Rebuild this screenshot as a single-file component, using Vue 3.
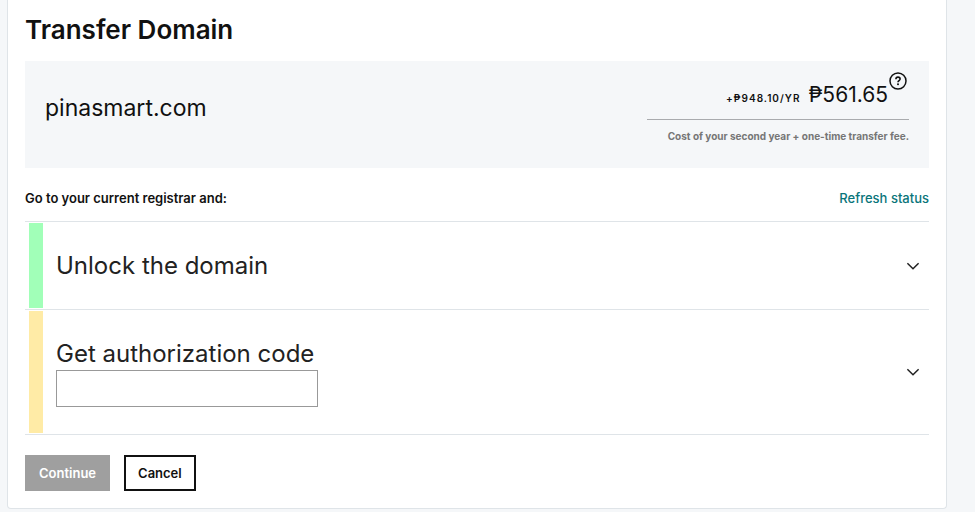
<template>
    <main class="transferCard">
        <h1 class="pageTitle">Transfer Domain</h1>

        <!-- Domain and price -->
        <section class="domainSummary">
            <h2 class="domainName">{{ domain }}</h2>
            <div class="priceBox">
                <div class="priceRow">
                    <span class="renewalPrice">+₱948.10/YR</span>
                    <span class="price">₱561.65</span>
                    <button type="button" class="helpButton" aria-label="Price details">
                        <svg width="18" height="18" viewBox="0 0 18 18" fill="none" stroke="currentColor">
                            <circle cx="9" cy="9" r="8" stroke-width="1.5" />
                            <path d="M6.9 7.2C6.9 5.9 7.8 5.1 9 5.1s2.1.8 2.1 1.9c0 1.5-2.1 1.6-2.1 3.2" stroke-width="1.6" />
                            <circle cx="9" cy="12.3" r="1" fill="currentColor" stroke="none" />
                        </svg>
                    </button>
                </div>
                <p class="priceNote">Cost of your second year + one-time transfer fee.</p>
            </div>
        </section>

        <div class="registrarRow">
            <span class="registrarText">Go to your current registrar and:</span>
            <a href="#" class="refreshLink" @click.prevent>Refresh status</a>
        </div>

        <!-- Steps -->
        <ul class="steps">
            <li v-for="step in steps" :key="step.id" class="step" :class="step.status">
                <div class="stepBody">
                    <label v-if="step.hasInput" class="stepTitle" :for="step.id">{{ step.title }}</label>
                    <h3 v-else class="stepTitle">{{ step.title }}</h3>
                    <input v-if="step.hasInput" :id="step.id" v-model="authCode" type="text" class="codeInput">
                </div>
                <button type="button" class="toggleButton" :aria-label="step.title">
                    <svg width="14" height="8" viewBox="0 0 14 8" fill="none" stroke="currentColor" stroke-width="1.5">
                        <path d="M1.4 1.2 7 6.7l5.6-5.5" />
                    </svg>
                </button>
            </li>
        </ul>

        <div class="actions">
            <button type="button" class="btn btnContinue" :disabled="!authCode">Continue</button>
            <button type="button" class="btn btnCancel">Cancel</button>
        </div>
    </main>
</template>

<script setup>
import { ref } from "vue";

const domain = "pinasmart.com";
const authCode = ref("");

const steps = [
    { id: "unlock", title: "Unlock the domain", status: "done", hasInput: false },
    { id: "auth-code", title: "Get authorization code", status: "pending", hasInput: true },
];
</script>

<style>
body {
    margin: 0;
    background: #f5f7f9;
}
</style>

<style scoped>
.transferCard {
    margin: 0 28px 3px 7px;
    padding: 12px 17px 17px;
    border: 1px solid #dfe4e8;
    border-top: 0;
    border-radius: 0 0 4px 4px;
    background: #fff;
    color: #111;
    font-family: Inter, "Liberation Sans", sans-serif;
}

.pageTitle {
    margin: 0 0 13px;
    font-size: 26px;
    line-height: 36px;
    font-weight: 600;
}

.domainSummary {
    display: flex;
    justify-content: space-between;
    padding: 11px 20px 24px;
    background: #f5f7f9;
}

.domainName {
    margin: 20px 0 0;
    font-size: 23px;
    line-height: 32px;
    font-weight: 400;
}

.priceBox {
    width: 262px;
}

.priceRow {
    display: flex;
    align-items: baseline;
    justify-content: flex-end;
    height: 47px;
    border-bottom: 1px solid #a9abae;
}

.renewalPrice {
    margin-right: 8px;
    font-size: 10px;
    font-weight: 600;
    letter-spacing: 1px;
}

.price {
    font-size: 21px;
    line-height: 46px;
}

.helpButton {
    align-self: flex-start;
    margin: 0 2px 0 1px;
    padding: 0;
    border: 0;
    background: none;
    color: #111;
    line-height: 0;
}

.priceNote {
    margin: 8px 0 0;
    color: #767676;
    font-size: 10px;
    line-height: 16px;
    font-weight: 700;
    text-align: right;
    white-space: nowrap;
}

.registrarRow {
    display: flex;
    justify-content: space-between;
    padding: 20px 0 13px;
    font-size: 13px;
    line-height: 20px;
}

.registrarText {
    font-weight: 600;
}

.refreshLink {
    color: #09757a;
    font-weight: 500;
    text-decoration: none;
}

.steps {
    margin: 0;
    padding: 0;
    border-top: 1px solid #dfe4e8;
    list-style: none;
}

.step {
    display: flex;
    align-items: center;
    justify-content: space-between;
    padding: 1px 9px 1px 4px;
    border-bottom: 1px solid #dfe4e8;
    color: #222;
}

.stepBody {
    display: flex;
    flex-direction: column;
    padding: 26px 0;
    padding-left: 13px;
    border-left: 14px solid transparent;
}

.done .stepBody {
    border-left-color: #a1ffb8;
}

.pending .stepBody {
    border-left-color: #ffeba6;
}

.stepTitle {
    margin: 0;
    font-size: 24px;
    line-height: 33px;
    font-weight: 400;
}

.codeInput {
    box-sizing: border-box;
    width: 262px;
    height: 37px;
    padding: 0 10px;
    border: 1px solid #999;
    background: #fff;
    font: inherit;
}

.toggleButton {
    padding: 0;
    border: 0;
    background: none;
    color: #222;
    line-height: 0;
}

.actions {
    display: flex;
    gap: 14px;
    padding-top: 20px;
}

.btn {
    height: 36px;
    padding: 0 12px;
    border: 2px solid #111;
    background: #fff;
    color: #111;
    font-family: inherit;
    font-size: 13px;
    font-weight: 600;
}

.btnContinue:disabled {
    border-color: #9f9f9f;
    background: #9f9f9f;
    color: #fff;
}
</style>
